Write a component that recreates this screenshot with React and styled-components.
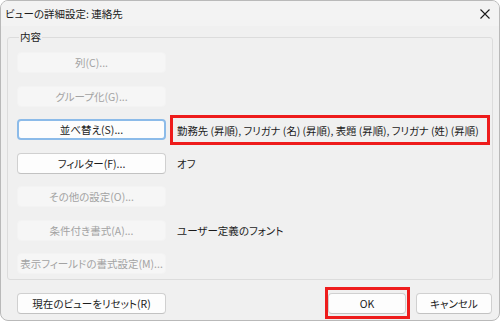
import React from "react"
import styled, { createGlobalStyle } from "styled-components"

const GlobalStyle = createGlobalStyle`
  html, body {
    margin: 0;
    padding: 0;
    background: #ffffff;
  }
  body {
    font-family: "Noto Sans CJK JP", "Noto Sans", sans-serif;
    font-size: 10.5px;
    font-feature-settings: "palt";
    color: #1b1b1b;
  }
  button {
    font-feature-settings: "palt";
  }
`

const Window = styled.div`
  width: 500px;
  height: 321px;
  box-sizing: border-box;
  border: 1px solid #b9b9b9;
  border-radius: 8px;
  background: #f0f0f0;
  display: flex;
  flex-direction: column;
  overflow: hidden;
`

const TitleBar = styled.div`
  height: 25px;
  display: flex;
  align-items: center;
  justify-content: space-between;
  padding: 0 8px 0 4px;
  background: #f3f3f3;
  flex-shrink: 0;
`

const Title = styled.span`
  font-size: 10.5px;
  color: #1b1b1b;
`

const CloseBtn = styled.div`
  width: 12px;
  height: 12px;
  display: flex;
  align-items: center;
  justify-content: center;
`

const GroupBox = styled.fieldset`
  margin: 4px 6px 0 6px;
  padding: 8px 9px 6px 9px;
  border: 1px solid #dcdcdc;
  border-radius: 3px;
  height: 250px;
  box-sizing: border-box;
  min-width: 0;
`

const Legend = styled.legend`
  padding: 0 1px;
  margin-left: 2px;
  font-size: 10.5px;
  line-height: 14px;
`

const Rows = styled.div`
  display: flex;
  flex-direction: column;
  gap: 12.5px;
`

const Row = styled.div`
  display: flex;
  align-items: center;
  height: 21px;
  gap: 11px;
`

const Button = styled.button`
  box-sizing: border-box;
  width: ${p => p.$w || 149}px;
  height: 21px;
  padding: 0;
  font-family: inherit;
  font-size: 10.5px;
  white-space: nowrap;
  border-radius: 4px;
  flex-shrink: 0;
  color: ${p => (p.disabled ? "#a3a3a3" : "#1b1b1b")};
  background: ${p => (p.disabled ? "#f6f6f6" : "#fdfdfd")};
  border: ${p =>
    p.disabled
      ? "1px solid #f3f3f3"
      : p.$focus
      ? "2px solid #8cbbe9"
      : "1px solid #d0d0d0"};
  border-bottom-color: ${p =>
    p.disabled ? "#f3f3f3" : p.$focus ? "#8cbbe9" : "#c2c2c2"};
`

const Value = styled.span`
  font-size: 10.5px;
  white-space: nowrap;
`

const Highlight = styled.div`
  box-sizing: border-box;
  width: 320px;
  flex-shrink: 0;
  border: 3px solid #ee1c1c;
  height: 30px;
  margin: -4px 0 -5px -7px;
  padding: 0 0 0 4px;
  display: flex;
  align-items: center;
  font-size: 10.4px;
  white-space: nowrap;
  overflow: hidden;
`

const Footer = styled.div`
  display: flex;
  align-items: center;
  padding: 7px 7px 0 16px;
  gap: 6px;
`

const Spacer = styled.div`
  flex: 1;
`

const RedFrame = styled.div`
  border: 3px solid #ee1c1c;
  padding: 3px 1px 2px 0;
  display: flex;
`

export default function App() {
  return (
    <>
      <GlobalStyle />
      <Window>
        <TitleBar>
          <Title>ビューの詳細設定: 連絡先</Title>
          <CloseBtn>
            <svg width="10" height="10" viewBox="0 0 10 10">
              <path d="M0.5 0.5 L9.5 9.5 M9.5 0.5 L0.5 9.5" stroke="#1b1b1b" strokeWidth="1.1" />
            </svg>
          </CloseBtn>
        </TitleBar>
        <GroupBox>
          <Legend>内容</Legend>
          <Rows>
            <Row>
              <Button disabled>列(C)...</Button>
            </Row>
            <Row>
              <Button disabled>グループ化(G)...</Button>
            </Row>
            <Row>
              <Button $focus>並べ替え(S)...</Button>
              <Highlight>
                勤務先 (昇順), フリガナ (名) (昇順), 表題 (昇順), フリガナ (姓) (昇順)
              </Highlight>
            </Row>
            <Row>
              <Button>フィルター(F)...</Button>
              <Value>オフ</Value>
            </Row>
            <Row>
              <Button disabled>その他の設定(O)...</Button>
            </Row>
            <Row>
              <Button disabled>条件付き書式(A)...</Button>
              <Value>ユーザー定義のフォント</Value>
            </Row>
            <Row>
              <Button disabled>表示フィールドの書式設定(M)...</Button>
            </Row>
          </Rows>
        </GroupBox>
        <Footer>
          <Button>現在のビューをリセット(R)</Button>
          <Spacer />
          <RedFrame>
            <Button $w={78}>OK</Button>
          </RedFrame>
          <Button $w={76}>キャンセル</Button>
        </Footer>
      </Window>
    </>
  )
}
